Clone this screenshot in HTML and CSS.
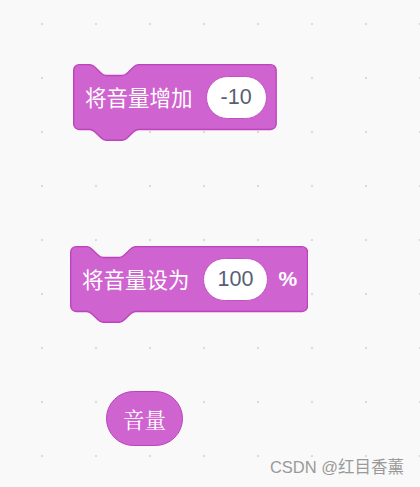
FILE: index.html
```html
<!DOCTYPE html>
<html lang="zh-CN">
<head>
    <meta charset="UTF-8">
    <meta name="viewport" content="width=device-width, initial-scale=1.0">
    <title>音量积木</title>
    <link rel="stylesheet" href="styles.css">
</head>
<body>
    <div id="workspace">
        <!-- change volume by -->
        <div class="stack-block block-change">
            <svg class="block-shape" width="203.85" height="76.95" viewBox="0 0 151 57">
                <path transform="translate(0.5,0.5)" d="M 0,4 A 4,4 0 0,1 4,0 H 12 c 2,0 3,1 4,2 l 4,4 c 1,1 2,2 4,2 h 12 c 2,0 3,-1 4,-2 l 4,-4 c 1,-1 2,-2 4,-2 H 146 a 4,4 0 0,1 4,4 v 40 a 4,4 0 0,1 -4,4 H 48 c -2,0 -3,1 -4,2 l -4,4 c -1,1 -2,2 -4,2 h -12 c -2,0 -3,-1 -4,-2 l -4,-4 c -1,-1 -2,-2 -4,-2 H 4 a 4,4 0 0,1 -4,-4 z"/>
            </svg>
            <div class="block-row">
                <span class="block-label">将音量增加</span>
                <span class="block-field">-10</span>
            </div>
        </div>

        <!-- set volume to -->
        <div class="stack-block block-set">
            <svg class="block-shape" width="238.28" height="76.95" viewBox="0 0 176.5 57">
                <path transform="translate(0.5,0.5)" d="M 0,4 A 4,4 0 0,1 4,0 H 12 c 2,0 3,1 4,2 l 4,4 c 1,1 2,2 4,2 h 12 c 2,0 3,-1 4,-2 l 4,-4 c 1,-1 2,-2 4,-2 H 171.5 a 4,4 0 0,1 4,4 v 40 a 4,4 0 0,1 -4,4 H 48 c -2,0 -3,1 -4,2 l -4,4 c -1,1 -2,2 -4,2 h -12 c -2,0 -3,-1 -4,-2 l -4,-4 c -1,-1 -2,-2 -4,-2 H 4 a 4,4 0 0,1 -4,-4 z"/>
            </svg>
            <div class="block-row">
                <span class="block-label">将音量设为</span>
                <span class="block-field">100</span>
                <span class="block-unit">%</span>
            </div>
        </div>

        <!-- volume reporter -->
        <div class="reporter-block">音量</div>
    </div>

    <div id="watermark">CSDN @红目香薰</div>
</body>
</html>
```

FILE: styles.css
```css
* {
    margin: 0;
    padding: 0;
    box-sizing: border-box;
}

html, body {
    width: 420px;
    height: 487px;
    overflow: hidden;
}

body {
    position: relative;
    background-color: #f9f9f9;
    font-family: 'Liberation Sans', 'Noto Sans CJK SC', sans-serif;
}

/* scripting area with the grid dots */
#workspace {
    position: relative;
    width: 100%;
    height: 100%;
    background-image: radial-gradient(circle, #dcdcdc 1.2px, transparent 1.6px);
    background-size: 54px 54px;
    background-repeat: repeat;
    background-position: 15px -3px;
}

.stack-block {
    position: absolute;
    height: 77px;
}

.block-change {
    left: 73px;
    top: 64px;
    width: 204px;
}

.block-set {
    left: 70px;
    top: 246px;
    width: 239px;
}

.block-shape {
    position: absolute;
    top: 0;
    left: 0;
}

.block-shape path {
    fill: #cf63cf;
    stroke: #bd42bd;
    stroke-width: 1;
}

.block-row {
    position: relative;
    height: 66px;
    display: flex;
    align-items: center;
    padding-left: 12px;
    gap: 13px;
    color: #ffffff;
    font-size: 21.5px;
}

.block-label {
    font-family: 'Noto Sans CJK SC', sans-serif;
    white-space: nowrap;
    line-height: 1;
}

.block-field {
    height: 43px;
    padding: 0 14px;
    min-width: 54px;
    display: flex;
    align-items: center;
    justify-content: center;
    background-color: #ffffff;
    border: 1px solid #c353c3;
    border-radius: 22px;
    color: #575e75;
    font-family: 'Liberation Sans', sans-serif;
    font-size: 21.5px;
}

.block-unit {
    margin-left: -3px;
    font-family: 'Liberation Sans', sans-serif;
    font-weight: bold;
    font-size: 21px;
}

.reporter-block {
    position: absolute;
    left: 106px;
    top: 391px;
    width: 77px;
    height: 55px;
    display: flex;
    align-items: center;
    justify-content: center;
    background-color: #cf63cf;
    border: 1px solid #bd42bd;
    border-radius: 28px;
    color: #ffffff;
    font-family: 'Noto Serif CJK SC', 'Noto Sans CJK SC', serif;
    font-size: 21.5px;
}

#watermark {
    position: absolute;
    right: 16px;
    bottom: 9px;
    color: #999999;
    font-family: 'Liberation Sans', 'Noto Sans CJK SC', sans-serif;
    font-size: 16.5px;
    line-height: 1.2;
}
```
